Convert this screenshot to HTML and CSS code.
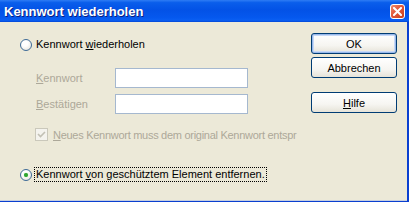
FILE: index.html
```html
<!DOCTYPE html>
<html lang="de">
<head>
<meta charset="utf-8">
<title>Kennwort wiederholen</title>
<link rel="stylesheet" href="styles.css">
</head>
<body>
<div class="window">
  <div class="titlebar">
    <span class="title">Kennwort wiederholen</span>
    <span class="close">
      <svg width="9" height="9" viewBox="0 0 9 9"><path d="M1 1 L8 8 M8 1 L1 8" stroke="#fff" stroke-width="2" stroke-linecap="square"/></svg>
    </span>
  </div>
  <div class="content">
    <div class="opts">
      <div class="radio-row">
        <span class="radio"></span>
        <span class="label">Kennwort <u>w</u>iederholen</span>
      </div>
      <div class="field first">
        <span class="flabel"><u>K</u>ennwort</span>
        <span class="input"></span>
      </div>
      <div class="field second">
        <span class="flabel"><u>B</u>estätigen</span>
        <span class="input"></span>
      </div>
      <div class="check-row">
        <span class="check">
          <svg width="9" height="9" viewBox="0 0 9 9"><path d="M1 4 L3.5 6.5 L8 2" fill="none" stroke="#C2C0B4" stroke-width="1.6"/></svg>
        </span>
        <span class="ctext"><u>N</u>eues Kennwort muss dem original Kennwort entspr</span>
      </div>
      <div class="radio-row last">
        <span class="radio on"><span class="dot"></span></span>
        <span class="label focus">Kennwort <u>v</u>on geschütztem Element entfernen.</span>
      </div>
    </div>
    <div class="actions">
      <span class="btn default">OK</span>
      <span class="btn">Abbrechen</span>
      <span class="btn help"><u>H</u>ilfe</span>
    </div>
  </div>
</div>
</body>
</html>
```
FILE: styles.css
```css
html, body { margin: 0; padding: 0; background: #ECE9D8; }
body { font-family: "Liberation Sans", Arial, sans-serif; font-size: 11px; color: #000; }
.window {
  width: 409px; height: 202px; box-sizing: border-box;
  display: flex; flex-direction: column;
  background: #0A3FD0;
  padding-right: 2px; padding-bottom: 1px;
}
.titlebar {
  height: 22px; flex: none;
  margin-right: -2px;
  display: flex; align-items: center; justify-content: space-between;
  background: linear-gradient(to bottom, #2E7CF4 0%, #0A5EEB 12%, #0352E6 45%, #0558EE 80%, #0A5FF2 92%, #0447D6 100%);
  padding: 0 4px 0 4px;
}
.title {
  color: #fff; font-weight: bold; font-size: 13px;
  text-shadow: 1px 1px 0 #0A1E80;
}
.close {
  width: 13px; height: 13px; border: 1px solid #fff; border-radius: 3px;
  background: linear-gradient(135deg, #F08A6A 0%, #E2583A 45%, #C8401E 100%);
  display: flex; align-items: center; justify-content: center;
}
.content {
  flex: 1; background: #ECE9D8;
  border-bottom: 1px solid #C6CEDF;
  display: flex;
  padding: 11px 0 0 20px;
}
.opts { width: 278px; overflow: hidden; padding-top: 5px; flex: none; }
.radio-row { display: flex; align-items: center; height: 13px; white-space: nowrap; }
.radio {
  width: 10px; height: 10px; border-radius: 50%;
  border: 1px solid #3D6A97;
  background: radial-gradient(circle at 40% 35%, #fff 30%, #E2DFD4 100%);
  display: flex; align-items: center; justify-content: center;
  margin-right: 4px; flex: none;
}
.dot { width: 4px; height: 4px; border-radius: 50%; background: #2FA52F; box-shadow: 0 0 1px #6CD06C; }
.label { line-height: 13px; }
.focus { outline: 1px dotted #000; outline-offset: 0; margin-left: -1px; padding: 0 1px; }
.field { display: flex; align-items: center; margin-left: 16px; }
.field.first { margin-top: 17px; }
.field.second { margin-top: 6px; }
.flabel { width: 79px; color: #ACA899; }
.input { width: 131px; height: 18px; border: 1px solid #A5B8CF; background: #fff; }
.check-row { display: flex; align-items: center; margin-left: 15px; margin-top: 14px; white-space: nowrap; height: 13px; }
.check {
  width: 11px; height: 11px; border: 1px solid #CAC8BB; background: #F4F3EE;
  display: flex; align-items: center; justify-content: center; flex: none;
  margin-right: 5px;
}
.ctext { color: #ACA899; letter-spacing: -0.28px; }
.radio-row.last { margin-top: 27px; }
.actions { margin-left: 13px; display: flex; flex-direction: column; }
.btn {
  width: 84px; height: 19px; box-sizing: content-box;
  border: 1px solid #003C74; border-radius: 3px;
  background: linear-gradient(to bottom, #FFFFFF 0%, #F6F5F1 60%, #E6E3D8 100%);
  display: flex; align-items: center; justify-content: center;
  margin-bottom: 3px;
}
.btn.default { box-shadow: inset 0 0 0 1px #98B8EA, inset 0 0 0 2px #C7D9F6; }
.btn.help { margin-top: 11px; }
u { text-decoration: underline; text-underline-offset: 1px; }
```
